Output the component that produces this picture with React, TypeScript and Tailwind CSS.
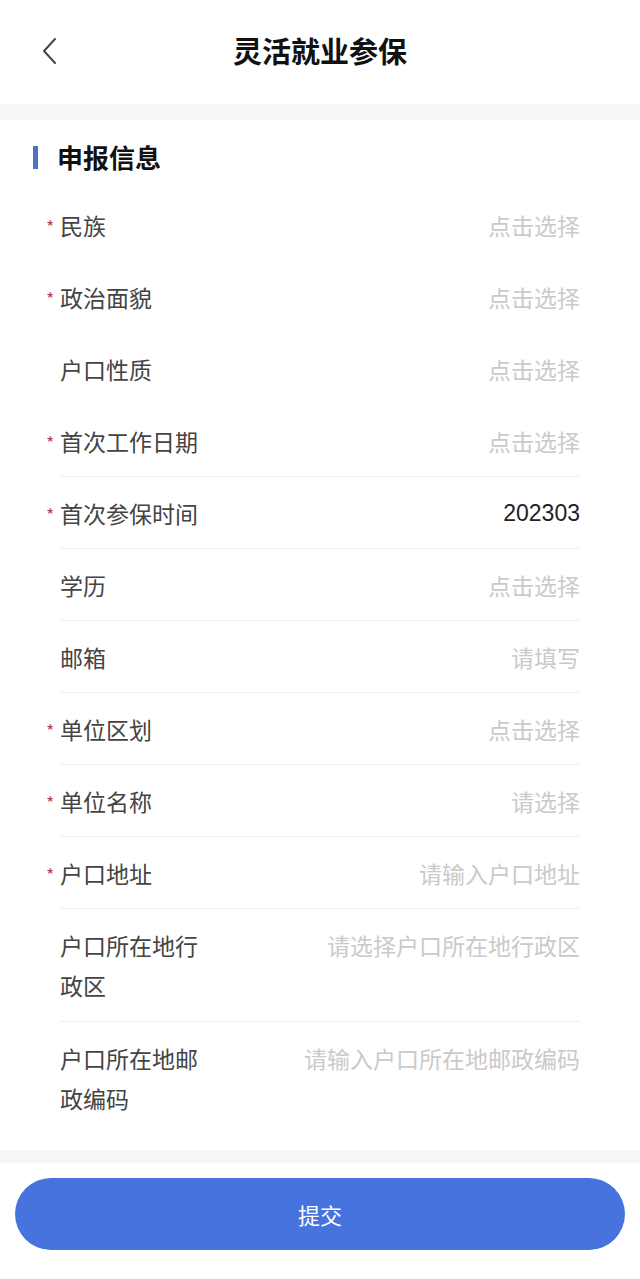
import React from 'react';

type Field = {
  label: string;
  required?: boolean;
  value?: string;
  placeholder?: string;
  divider?: boolean;
  tall?: boolean;
};

const fields: Field[] = [
  { label: '民族', required: true, placeholder: '点击选择' },
  { label: '政治面貌', required: true, placeholder: '点击选择' },
  { label: '户口性质', placeholder: '点击选择' },
  { label: '首次工作日期', required: true, placeholder: '点击选择', divider: true },
  { label: '首次参保时间', required: true, value: '202303', divider: true },
  { label: '学历', placeholder: '点击选择', divider: true },
  { label: '邮箱', placeholder: '请填写', divider: true },
  { label: '单位区划', required: true, placeholder: '点击选择', divider: true },
  { label: '单位名称', required: true, placeholder: '请选择', divider: true },
  { label: '户口地址', required: true, placeholder: '请输入户口地址', divider: true },
  { label: '户口所在地行政区', placeholder: '请选择户口所在地行政区', divider: true, tall: true },
  { label: '户口所在地邮政编码', placeholder: '请输入户口所在地邮政编码', tall: true },
];

const FieldRow = ({ field }: { field: Field }) => (
  <div className={`relative flex ${field.tall ? 'items-start py-4' : 'items-center h-[72px]'} ${field.divider ? 'border-b border-[#efefef]' : ''}`}>
    {field.required && (
      <span className="absolute left-[-14px] top-[28px] text-[18px] leading-none text-[#b3485c]">*</span>
    )}
    <div className={`shrink-0 text-[23px] text-[#444] ${field.tall ? 'w-[142px] leading-[40px]' : 'leading-[26px]'}`}>
      {field.label}
    </div>
    <div className={`flex-1 text-right text-[23px] ${field.tall ? 'leading-[40px]' : 'leading-[26px]'} ${field.value ? 'text-[#222] text-[22px] font-["Liberation_Sans",sans-serif]' : 'text-[#cacaca]'}`}>
      {field.value ?? field.placeholder}
    </div>
  </div>
);

export default function App() {
  return (
    <div className="w-[640px] h-[1279px] bg-white flex flex-col font-['Noto_Sans_CJK_SC','Noto_Sans',sans-serif]">
      {/* header */}
      <div className="relative h-[104px] flex items-center justify-center">
        <svg className="absolute left-[40px] top-[37px]" width="20" height="28" viewBox="0 0 20 28" fill="none">
          <path d="M15 2 L4 14 L15 26" stroke="#444" strokeWidth="2" strokeLinecap="round" strokeLinejoin="round" />
        </svg>
        <h1 className="text-[29px] font-bold text-[#111] leading-none -mt-[4px]">灵活就业参保</h1>
      </div>
      <div className="h-[16px] bg-[#f5f6f8]" />

      {/* section title */}
      <div className="flex items-center pt-[24px] pb-[19px] pl-[33px]">
        <div className="w-[5px] h-[23px] bg-[#4e72c7]" />
        <div className="ml-[19px] text-[26px] leading-[26px] font-bold text-[#111]">申报信息</div>
      </div>

      {/* fields */}
      <div className="pl-[60px] pr-[60px]">
        {fields.map((f) => (
          <FieldRow key={f.label} field={f} />
        ))}
      </div>

      <div className="flex-1" />
      <div className="h-[13px] bg-[#f5f6f8]" />
      <div className="h-[116px] px-[15px] pt-[15px]">
        <button className="w-full h-[72px] rounded-full bg-[#4673de] text-white text-[22px]">提交</button>
      </div>
    </div>
  );
}
